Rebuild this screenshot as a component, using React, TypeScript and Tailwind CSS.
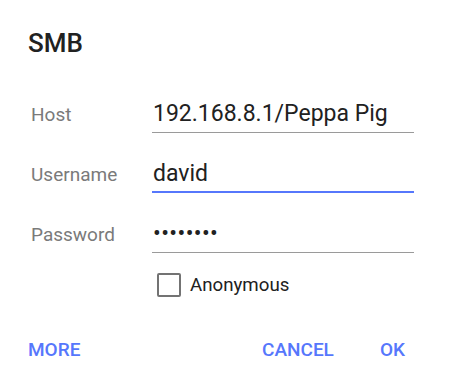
import React from "react";

export default function App() {
  const font = { fontFamily: "Roboto, 'Noto Sans', sans-serif" };
  return (
    <div className="w-[450px] h-[390px] bg-white text-[#212121] overflow-hidden" style={font}>
      <div className="pt-[28px] pl-[28px] text-[26px] leading-[30px] font-medium">SMB</div>

      <div className="mt-[42px] flex items-baseline pl-[31px]">
        <div className="w-[121px] text-[19px] leading-[24px] text-[#7a7a7a]">Host</div>
        <div className="w-[262px] pb-[4px] border-b border-[#9a9a9a] text-[23px] leading-[28px] pl-[1px]">
          192.168.8.1/Peppa Pig
        </div>
      </div>

      <div className="mt-[27px] flex items-baseline pl-[31px]">
        <div className="w-[121px] text-[19px] leading-[24px] text-[#7a7a7a]">Username</div>
        <div className="w-[262px] pb-[3px] border-b-2 border-[#5677fc] text-[23px] leading-[28px] pl-[1px]">
          david
        </div>
      </div>

      <div className="mt-[27px] flex items-baseline pl-[31px]">
        <div className="w-[121px] text-[19px] leading-[24px] text-[#7a7a7a]">Password</div>
        <div className="w-[262px] pb-[4px] border-b border-[#9a9a9a] text-[23px] leading-[28px] pl-[1px] tracking-[0.4px]">
          ••••••••
        </div>
      </div>

      <div className="mt-[20px] flex items-center pl-[157px]">
        <div className="w-[24px] h-[24px] border-2 border-[#737373] rounded-[2px]" />
        <div className="ml-[9px] text-[18.7px] leading-[24px]">Anonymous</div>
      </div>

      <div className="mt-[41px] flex items-center justify-between pl-[28px] pr-[45px] text-[19px] leading-[24px] font-medium text-[#5677fc]">
        <div>MORE</div>
        <div className="flex gap-[46px]">
          <div>CANCEL</div>
          <div>OK</div>
        </div>
      </div>
    </div>
  );
}
